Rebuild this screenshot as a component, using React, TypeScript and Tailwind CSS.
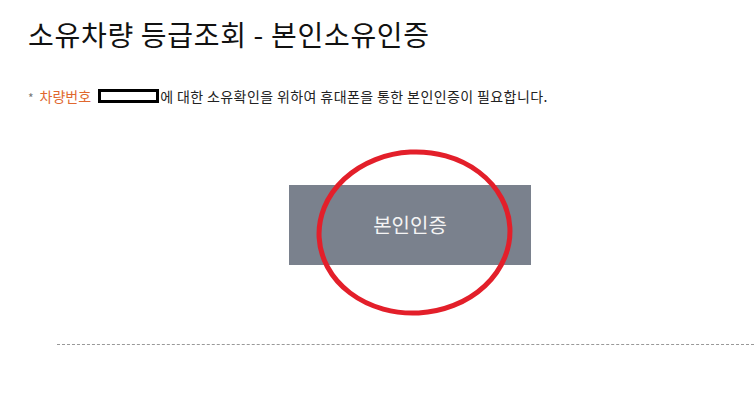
import React from "react";

export default function App() {
  const font = { fontFamily: '"Noto Sans CJK KR", "Noto Sans", sans-serif' };
  return (
    <div className="relative w-[754px] h-[405px] bg-white overflow-hidden" style={font}>
      <div className="pl-[28px] pt-[15px]">
        <h1 className="text-[28px] leading-[38px] text-[#111] font-normal tracking-[0.7px]">
          소유차량 등급조회 - 본인소유인증
        </h1>
        <p className="mt-[34px] flex items-center text-[14px] leading-[18px] text-[#222]">
          <span className="text-[#777] mr-[6px] text-[12px] translate-y-[2px]">*</span>
          <span className="text-[#e0682f]">차량번호</span>
          <span className="inline-block ml-[7px] w-[61px] h-[14px] border-[3px] border-black bg-white" />
          <span className="ml-[1px] tracking-[0.4px]">에 대한 소유확인을 위하여 휴대폰을 통한 본인인증이 필요합니다.</span>
        </p>
      </div>
      <div className="mt-[80px] pl-[289px]">
        <button className="w-[242px] h-[80px] bg-[#7a818d] text-[#f4f4f4] text-[20px]">
          본인인증
        </button>
      </div>
      <div className="mt-[79px] ml-[57px] border-t border-dashed border-[#999]" />
      <svg
        className="absolute left-0 top-0 pointer-events-none"
        width="754"
        height="405"
        viewBox="0 0 754 405"
      >
        <ellipse
          cx="414.5"
          cy="232.5"
          rx="95.5"
          ry="80.5"
          fill="none"
          stroke="#e31f2a"
          strokeWidth="5"
          transform="rotate(-3 414.5 232.5)"
        />
      </svg>
    </div>
  );
}
